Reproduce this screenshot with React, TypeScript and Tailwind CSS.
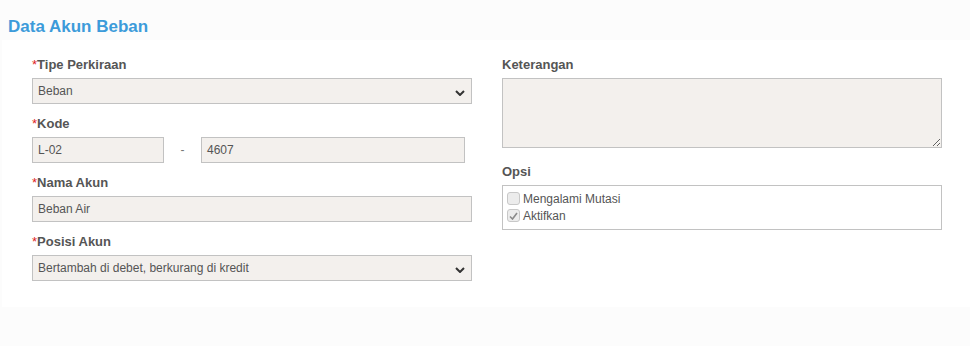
function Label({ text, required }: { text: string; required?: boolean }) {
  return (
    <p className="h-5 mb-[3px] text-[13px] leading-5 font-bold text-[#555]">
      {required && <span className="text-[#e02222] font-normal">*</span>}
      {text}
    </p>
  );
}

function Chevron() {
  return (
    <svg width="10" height="6" viewBox="0 0 10 6" className="absolute right-[6px] top-[11px]">
      <path d="M1 1 L5 5 L9 1" fill="none" stroke="#333" strokeWidth="2" />
    </svg>
  );
}

function Select({ value }: { value: string }) {
  return (
    <div className="relative h-[26px] w-[440px] border border-[#c2c2c2] bg-[#f3f0ed] pl-[5px] text-[12px] leading-[24px] text-[#555]">
      {value}
      <Chevron />
    </div>
  );
}

function Input({ value, width }: { value: string; width: string }) {
  return (
    <div className={`h-[26px] ${width} border border-[#c2c2c2] bg-[#f3f0ed] pl-[5px] text-[12px] leading-[24px] text-[#555]`}>
      {value}
    </div>
  );
}

function Check({ checked, label }: { checked?: boolean; label: string }) {
  return (
    <div className="flex items-center h-[17px] gap-[3px]">
      <span className="flex items-center justify-center w-[13px] h-[13px] rounded-[3px] border border-[#c8c8c8] bg-[#ececec]">
        {checked && (
          <svg width="9" height="8" viewBox="0 0 9 8">
            <path d="M1 4.5 L3.5 7 L8 1" fill="none" stroke="#8a8a8a" strokeWidth="1.6" />
          </svg>
        )}
      </span>
      <span className="text-[12px] text-[#555]">{label}</span>
    </div>
  );
}

export default function App() {
  return (
    <main className="min-h-[346px] bg-[#fcfcfc] font-['Liberation_Sans',Arial,sans-serif]">
      <header className="h-10 pt-4 pl-2">
        <h1 className="text-[17px] leading-[21px] font-bold text-[#3c9bda]">Data Akun Beban</h1>
      </header>

      <div className="ml-[2px] h-[267px] bg-white pt-[15px] pl-[30px] flex gap-[30px]">
        <div className="w-[440px] flex flex-col gap-[10px]">
          <div>
            <Label text="Tipe Perkiraan" required />
            <Select value="Beban" />
          </div>
          <div>
            <Label text="Kode" required />
            <div className="flex items-center">
              <Input value="L-02" width="w-[132px]" />
              <span className="w-[37px] text-center text-[12px] text-[#777]">-</span>
              <Input value="4607" width="w-[264px]" />
            </div>
          </div>
          <div>
            <Label text="Nama Akun" required />
            <Input value="Beban Air" width="w-[440px]" />
          </div>
          <div>
            <Label text="Posisi Akun" required />
            <Select value="Bertambah di debet, berkurang di kredit" />
          </div>
        </div>

        <div className="w-[440px] flex flex-col">
          <Label text="Keterangan" />
          <textarea className="block h-[70px] w-[440px] border border-[#c2c2c2] bg-[#f3f0ed] text-[12px] outline-none" />
          <div className="mt-[14px]">
            <Label text="Opsi" />
            <div className="h-[45px] border border-[#c2c2c2] pt-[4px] pl-[4px]">
              <Check label="Mengalami Mutasi" />
              <Check checked label="Aktifkan" />
            </div>
          </div>
        </div>
      </div>
    </main>
  );
}
